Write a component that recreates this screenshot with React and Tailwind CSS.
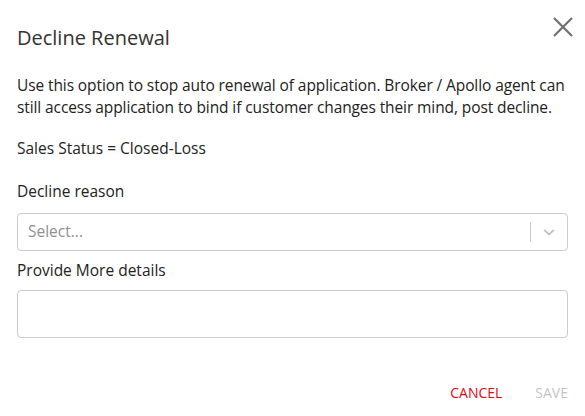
import React from "react";

export default function App() {
  return (
    <div className="w-[585px] h-[416px] bg-white text-[#222] font-['Open_Sans',sans-serif] overflow-hidden">
      <div className="flex items-start justify-between pl-[17px] pr-[12px] pt-[24px]">
        <h2 className="text-[20px] leading-[28px] text-[#333]">Decline Renewal</h2>
        <button className="mt-[-7px]" aria-label="close">
          <svg width="20" height="20" viewBox="0 0 20 20">
            <path d="M1 1 L19 19 M19 1 L1 19" stroke="#707070" strokeWidth="2.2" />
          </svg>
        </button>
      </div>
      <div className="px-[17px] text-[15.5px] leading-[21.5px]">
        <p className="mt-[23px] w-[562px] tracking-[-0.1px]">
          Use this option to stop auto renewal of application. Broker / Apollo agent can still access application to bind if customer changes their mind, post decline.
        </p>
        <p className="mt-[20px]">Sales Status = Closed-Loss</p>
        <div className="mt-[21.5px]">Decline reason</div>
        <div className="mt-[10px] h-[38px] border border-[#cccccc] rounded-[4px] flex items-center">
          <span className="flex-1 pl-[10px] text-[#8f8f8f]">Select...</span>
          <span className="w-px h-[20px] bg-[#cccccc]"></span>
          <span className="w-[36px] flex items-center justify-center">
            <svg width="14" height="14" viewBox="0 0 20 20">
              <path d="M3 7 L10 13.5 L17 7" fill="none" stroke="#c2c2c2" strokeWidth="2.6" />
            </svg>
          </span>
        </div>
        <div className="mt-[9px]">Provide More details</div>
        <div className="mt-[9px] h-[48px] border border-[#cccccc] rounded-[4px]"></div>
        <div className="mt-[45px] flex justify-end items-center gap-[33px] text-[14px] leading-[20px] font-medium pr-[0px]">
          <span className="text-[#e30613]">CANCEL</span>
          <span className="text-[#c4c4c4]">SAVE</span>
        </div>
      </div>
    </div>
  );
}
